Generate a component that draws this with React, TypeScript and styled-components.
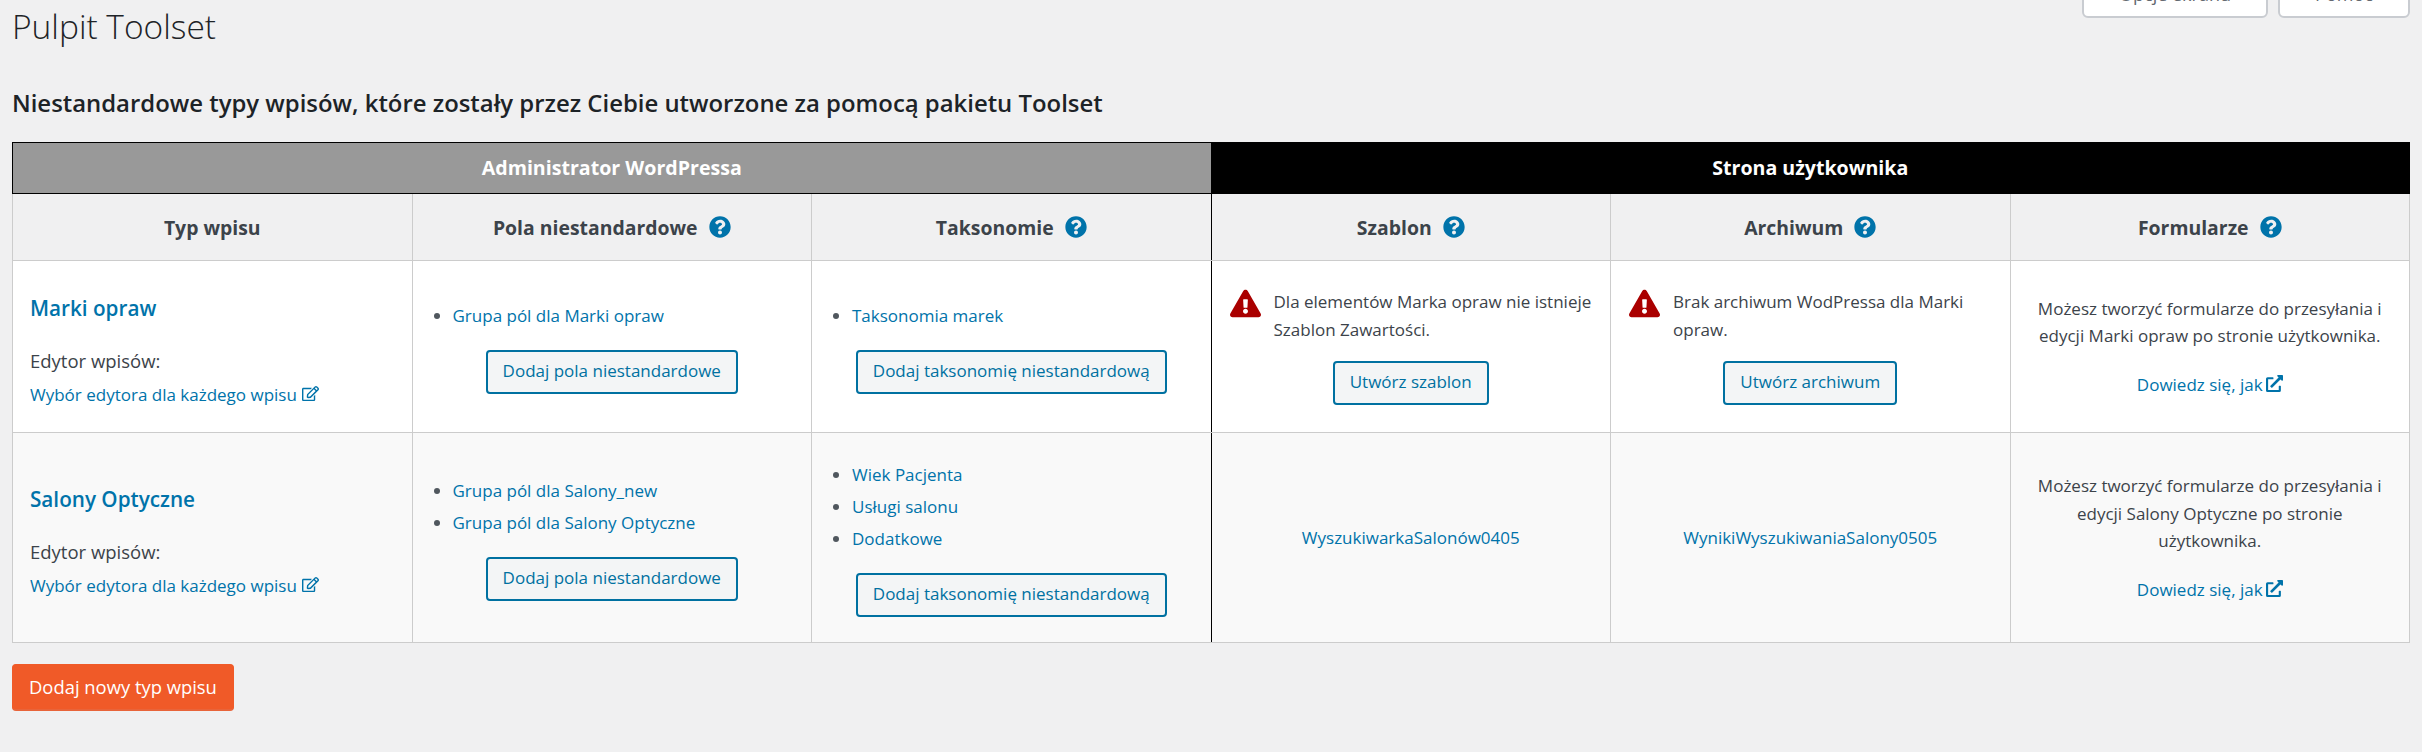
import React from "react";
import styled, { createGlobalStyle } from "styled-components";
import {
  FaQuestionCircle,
  FaRegEdit,
  FaExclamationTriangle,
  FaExternalLinkAlt,
} from "react-icons/fa";

const GlobalStyle = createGlobalStyle`
  html, body {
    margin: 0;
    padding: 0;
    background: #f0f0f1;
  }
  body {
    font-family: "Open Sans", "Noto Sans", sans-serif;
    font-size: 17px;
    color: #3c434a;
  }
`;

const Page = styled.div`
  padding: 0 12px;
  height: 752px;
  overflow: hidden;
  box-sizing: border-box;
`;

const TopBar = styled.div`
  display: flex;
  justify-content: space-between;
  align-items: flex-start;
  height: 56px;
`;

const PageTitle = styled.h1`
  margin: 3px 0 0;
  font-size: 33.5px;
  line-height: 46px;
  font-weight: 300;
  color: #1d2327;
`;

const ScreenTabs = styled.div`
  display: flex;
  align-items: flex-end;
  gap: 10px;
  height: 18px;
  overflow: hidden;
`;

const ScreenTab = styled.div<{ $width: number }>`
  width: ${({ $width }) => $width}px;
  height: 44px;
  box-sizing: border-box;
  flex: none;
  background: #fff;
  border: 2px solid #c9ccd1;
  border-radius: 0 0 6px 6px;
  text-align: center;
  font-size: 18px;
  line-height: 37px;
  color: #646970;
`;

const SectionTitle = styled.h2`
  margin: 30px 0 0;
  font-size: 23.9px;
  line-height: 34px;
  font-weight: 600;
  color: #1d2327;
`;

const Table = styled.table`
  width: 100%;
  margin-top: 22px;
  table-layout: fixed;
  border-collapse: collapse;
`;

const GroupCell = styled.th<{ $dark?: boolean }>`
  height: 51px;
  padding: 0 0 2px;
  box-sizing: border-box;
  border: 1px solid #000;
  background: ${({ $dark }) => ($dark ? "#000" : "#999")};
  color: #fff;
  font-size: 19.6px;
  font-weight: 700;
  text-align: center;
`;

const HeadCell = styled.th<{ $split?: boolean; $before?: boolean }>`
  height: 66px;
  padding: 0;
  background: #f0f0f1;
  border: 1px solid #ccc;
  border-top-color: #000;
  border-left-color: ${({ $split }) => ($split ? "#000" : "#ccc")};
  border-right-color: ${({ $before }) => ($before ? "#000" : "#ccc")};
  font-size: 19.4px;
  font-weight: 700;
  text-align: center;
  color: #3c434a;
`;

const HeadInner = styled.span`
  display: inline-flex;
  align-items: center;
  gap: 11px;
  color: #3c434a;
  svg {
    color: #0073aa;
    font-size: 22px;
  }
`;

const Row = styled.tr<{ $alt?: boolean; $height: number }>`
  height: ${({ $height }) => $height}px;
  background: ${({ $alt }) => ($alt ? "#f9f9f9" : "#fff")};
`;

const Cell = styled.td<{ $split?: boolean; $before?: boolean; $center?: boolean; $pad?: number }>`
  padding: 0 ${({ $pad }) => $pad ?? 18}px;
  vertical-align: middle;
  border: 1px solid #ccc;
  border-left-color: ${({ $split }) => ($split ? "#000" : "#ccc")};
  border-right-color: ${({ $before }) => ($before ? "#000" : "#ccc")};
  text-align: ${({ $center }) => ($center ? "center" : "left")};
  line-height: 27.5px;
`;

const Link = styled.a`
  color: #0073aa;
  text-decoration: none;
`;

const TypeName = styled.a`
  display: block;
  margin: 9px 0 25px;
  font-size: 20.7px;
  font-weight: 600;
  line-height: 28px;
  color: #0073aa;
`;

const EditorLabel = styled.div`
  margin-bottom: 7px;
  font-size: 18.5px;
  line-height: 27px;
`;

const InlineIcon = styled.span<{ $gap: number }>`
  margin-left: ${({ $gap }) => $gap}px;
  color: #0073aa;
  font-size: 17px;
  svg {
    vertical-align: -1px;
  }
`;

const ItemList = styled.ul`
  margin: 0 0 18px;
  padding: 0 0 0 22px;
  list-style: disc;
`;

const Item = styled.li`
  line-height: 32px;
  &::marker {
    color: #50575e;
  }
`;

const Centered = styled.div`
  display: flex;
  justify-content: center;
`;

const OutlineButton = styled.a`
  display: block;
  box-sizing: border-box;
  height: 44px;
  padding: 0 15px;
  background: #f3f5f6;
  border: 2px solid #0071a1;
  border-radius: 4px;
  color: #0071a1;
  line-height: 38px;
  white-space: nowrap;
`;

const Warning = styled.div`
  display: flex;
  gap: 13px;
  margin-bottom: 18px;
  svg {
    flex: none;
    color: #a00;
    font-size: 31px;
  }
`;

const FormText = styled.p`
  margin: 0 0 21px;
`;

const PrimaryButton = styled.a`
  display: inline-block;
  box-sizing: border-box;
  height: 47px;
  margin-top: 21px;
  padding: 0 16px;
  background: #f05a28;
  border: 1px solid #f05a28;
  border-bottom: 2px solid #e8643a;
  border-radius: 4px;
  color: #fff;
  font-size: 18.4px;
  line-height: 44px;
`;

type Kind = {
  name: string;
  fields: string[];
  taxonomies: string[];
  formText: string;
  height: number;
};

const kinds: Kind[] = [
  {
    name: "Marki opraw",
    fields: ["Grupa pól dla Marki opraw"],
    taxonomies: ["Taksonomia marek"],
    formText:
      "Możesz tworzyć formularze do przesyłania i edycji Marki opraw po stronie użytkownika.",
    height: 172,
  },
  {
    name: "Salony Optyczne",
    fields: ["Grupa pól dla Salony_new", "Grupa pól dla Salony Optyczne"],
    taxonomies: ["Wiek Pacjenta", "Usługi salonu", "Dodatkowe"],
    formText:
      "Możesz tworzyć formularze do przesyłania i edycji Salony Optyczne po stronie użytkownika.",
    height: 210,
  },
];

function Help({ label }: { label: string }) {
  return (
    <HeadInner>
      {label}
      <FaQuestionCircle />
    </HeadInner>
  );
}

function Items({ items, action }: { items: string[]; action: string }) {
  return (
    <>
      <ItemList>
        {items.map((item) => (
          <Item key={item}>
            <Link>{item}</Link>
          </Item>
        ))}
      </ItemList>
      <Centered>
        <OutlineButton>{action}</OutlineButton>
      </Centered>
    </>
  );
}

export default function App() {
  return (
    <Page>
      <GlobalStyle />
      <TopBar>
        <PageTitle>Pulpit Toolset</PageTitle>
        <ScreenTabs>
          <ScreenTab $width={186}>Opcje ekranu</ScreenTab>
          <ScreenTab $width={132}>Pomoc</ScreenTab>
        </ScreenTabs>
      </TopBar>
      <SectionTitle>
        Niestandardowe typy wpisów, które zostały przez Ciebie utworzone za pomocą pakietu Toolset
      </SectionTitle>
      <Table>
        <thead>
          <tr>
            <GroupCell colSpan={3}>Administrator WordPressa</GroupCell>
            <GroupCell colSpan={3} $dark>
              Strona użytkownika
            </GroupCell>
          </tr>
          <tr>
            <HeadCell>Typ wpisu</HeadCell>
            <HeadCell>
              <Help label="Pola niestandardowe" />
            </HeadCell>
            <HeadCell $before>
              <Help label="Taksonomie" />
            </HeadCell>
            <HeadCell $split>
              <Help label="Szablon" />
            </HeadCell>
            <HeadCell>
              <Help label="Archiwum" />
            </HeadCell>
            <HeadCell>
              <Help label="Formularze" />
            </HeadCell>
          </tr>
        </thead>
        <tbody>
          {kinds.map((kind, index) => (
            <Row key={kind.name} $alt={index === 1} $height={kind.height}>
              <Cell $pad={17}>
                <TypeName>{kind.name}</TypeName>
                <EditorLabel>Edytor wpisów:</EditorLabel>
                <Link>
                  Wybór edytora dla każdego wpisu
                  <InlineIcon $gap={5}>
                    <FaRegEdit />
                  </InlineIcon>
                </Link>
              </Cell>
              <Cell>
                <Items items={kind.fields} action="Dodaj pola niestandardowe" />
              </Cell>
              <Cell $before>
                <Items items={kind.taxonomies} action="Dodaj taksonomię niestandardową" />
              </Cell>
              {index === 0 ? (
                <>
                  <Cell $split>
                    <Warning>
                      <FaExclamationTriangle />
                      <span>Dla elementów Marka opraw nie istnieje Szablon Zawartości.</span>
                    </Warning>
                    <Centered>
                      <OutlineButton>Utwórz szablon</OutlineButton>
                    </Centered>
                  </Cell>
                  <Cell>
                    <Warning>
                      <FaExclamationTriangle />
                      <span>Brak archiwum WodPressa dla Marki opraw.</span>
                    </Warning>
                    <Centered>
                      <OutlineButton>Utwórz archiwum</OutlineButton>
                    </Centered>
                  </Cell>
                </>
              ) : (
                <>
                  <Cell $split $center>
                    <Link>WyszukiwarkaSalonów0405</Link>
                  </Cell>
                  <Cell $center>
                    <Link>WynikiWyszukiwaniaSalony0505</Link>
                  </Cell>
                </>
              )}
              <Cell $center>
                <FormText>{kind.formText}</FormText>
                <Link>
                  Dowiedz się, jak
                  <InlineIcon $gap={3}>
                    <FaExternalLinkAlt />
                  </InlineIcon>
                </Link>
              </Cell>
            </Row>
          ))}
        </tbody>
      </Table>
      <PrimaryButton>Dodaj nowy typ wpisu</PrimaryButton>
    </Page>
  );
}
